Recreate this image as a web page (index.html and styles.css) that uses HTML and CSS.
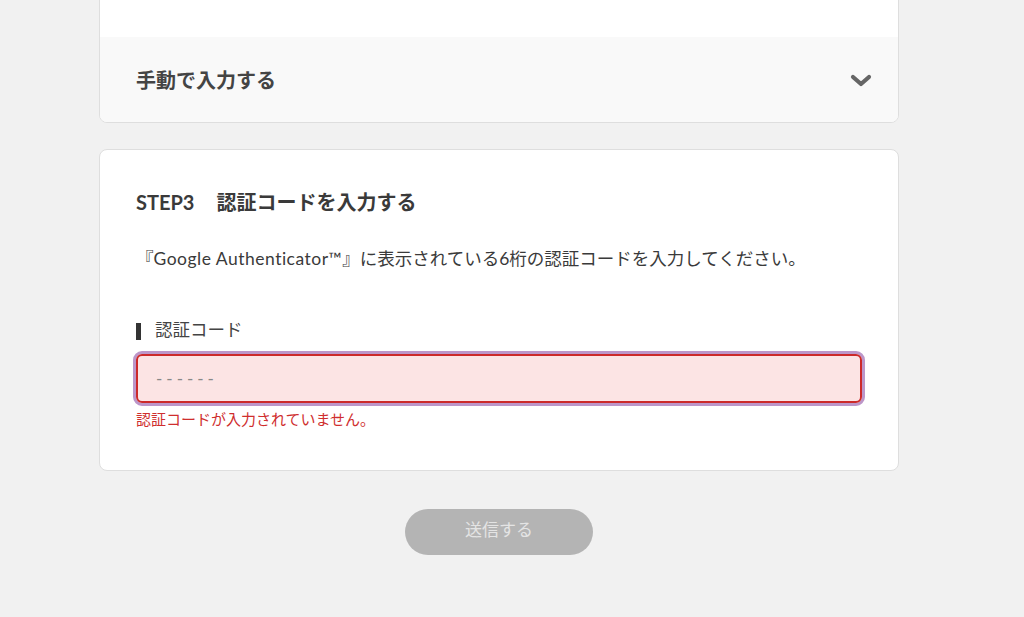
FILE: index.html
```html
<!DOCTYPE html>
<html lang="ja">
<head>
<meta charset="utf-8">
<link rel="stylesheet" href="styles.css">
</head>
<body>
<main class="page">
  <section class="card card-top">
    <div class="card-blank"></div>
    <div class="accordion">
      <span class="accordion-title">手動で入力する</span>
      <svg class="chevron" width="22" height="14" viewBox="0 0 22 14"><path d="M3 3 L11 10 L19 3" fill="none" stroke="#666" stroke-width="4.2" stroke-linecap="round" stroke-linejoin="round"/></svg>
    </div>
  </section>

  <section class="card card-step">
    <h2 class="step-title"><span class="step-no">STEP3</span>認証コードを入力する</h2>
    <p class="step-desc">『<span class="latin">Google Authenticator™</span>』に表示されている6桁の認証コードを入力してください。</p>
    <label class="field-label"><span class="bar"></span>認証コード</label>
    <div class="input-wrap">
      <div class="input">------</div>
    </div>
    <p class="error">認証コードが入力されていません。</p>
  </section>

  <div class="actions">
    <button class="submit" type="button">送信する</button>
  </div>
</main>
</body>
</html>
```

FILE: styles.css
```css
html, body {
  margin: 0;
  padding: 0;
  background: #f1f1f1;
  font-family: "Lato", "Noto Sans CJK JP", sans-serif;
  color: #333;
}
.page {
  width: 800px;
  margin: 0 0 0 99px;
}
.card {
  background: #fff;
  border: 1px solid #dedede;
  border-radius: 8px;
  box-sizing: border-box;
  overflow: hidden;
}
.card-top {
  margin-top: -12px;
}
.card-blank {
  height: 48px;
}
.accordion {
  background: #f9f9f9;
  height: 85px;
  display: flex;
  align-items: center;
  justify-content: space-between;
  padding: 0 26px 0 36px;
}
.accordion-title {
  font-size: 20px;
  font-weight: 700;
  color: #444;
}
.chevron {
  display: block;
  margin-top: 2px;
}
.card-step {
  margin-top: 26px;
  padding: 36px 36px 0 36px;
  height: 322px;
}
.step-title {
  margin: 0;
  font-size: 20px;
  font-weight: 700;
  color: #3a3a3a;
  line-height: 32px;
}
.step-no {
  margin-right: 22px;
}
.step-desc {
  margin: 27px 0 0;
  font-size: 17.5px;
  line-height: 28px;
  color: #3a3a3a;
}
.latin {
  letter-spacing: 0.5px;
}
.field-label {
  display: flex;
  align-items: center;
  margin-top: 43px;
  font-size: 17.5px;
  line-height: 28px;
  color: #444;
}
.bar {
  display: inline-block;
  width: 5px;
  height: 17px;
  background: #333;
  margin-right: 14px;
  margin-top: 3px;
}
.input-wrap {
  margin: 7px -3px 0;
  border: 3px solid #bc96c9;
  border-radius: 9px;
}
.input {
  height: 49px;
  box-sizing: border-box;
  border: 2px solid #cc2a2a;
  border-radius: 6px;
  background: #fce4e4;
  padding: 0 18px;
  display: flex;
  align-items: center;
  font-size: 17px;
  letter-spacing: 4px;
  color: #888;
}
.error {
  margin: 2px 0 0;
  font-size: 15px;
  line-height: 22px;
  color: #cf2e2e;
}
.actions {
  display: flex;
  justify-content: center;
  margin-top: 38px;
}
.submit {
  width: 188px;
  height: 46px;
  border: none;
  border-radius: 23px;
  background: #b4b4b4;
  color: #e4e4e4;
  font-family: "Lato", "Noto Sans CJK JP", sans-serif;
  font-size: 17px;
  line-height: 24px;
  padding: 0 0 4px;
}
```
